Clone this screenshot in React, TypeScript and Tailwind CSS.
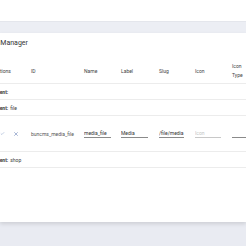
import React, { useState } from 'react';

interface MenuItem {
  id: string;
  name: string;
  label: string;
  slug: string;
}

interface Group {
  parent: string;
  items: MenuItem[];
}

const groups: Group[] = [
  { parent: '', items: [] },
  {
    parent: 'file',
    items: [{ id: 'buncms_media_file', name: 'media_file', label: 'Media', slug: '/file/media' }],
  },
  { parent: 'shop', items: [] },
];

const cols = 'grid grid-cols-[39px_53px_37px_38px_36px_37px_40px]';

const CheckIcon = () => (
  <svg width="5" height="5" viewBox="0 0 24 24" fill="none" stroke="#8aa0c8" strokeWidth="2.5">
    <path d="M4 12l5 5L20 6" />
  </svg>
);

const CloseIcon = () => (
  <svg width="6" height="6" viewBox="0 0 24 24" fill="none" stroke="#6f86b8" strokeWidth="2.4">
    <path d="M5 5l14 14M19 5L5 19" />
  </svg>
);

const App: React.FC = () => {
  const [rows, setRows] = useState(groups);

  const updateItem = (g: number, i: number, key: keyof MenuItem, value: string) => {
    const next = rows.map((grp, gi) =>
      gi !== g ? grp : { ...grp, items: grp.items.map((it, ii) => (ii !== i ? it : { ...it, [key]: value })) }
    );
    setRows(next);
  };

  return (
    <div className="w-[246px] h-[246px] overflow-hidden bg-[#e9ebf2] font-['Roboto',sans-serif] text-[#3a3a3a]">
      <div className="h-[21px] bg-white" />
      <div className="h-[12px] bg-[#eceef4] border-t border-[#e4e6ec]" />
      <div className="h-[189px] bg-white shadow-[0_2px_4px_rgba(0,0,0,0.12)] overflow-hidden">
        <div className="ml-[-19px] pt-[7px] h-[25px] text-[7px] leading-[7px] text-[#333]">Menu Manager</div>

        <div className="ml-[-8px] text-[5px] leading-[6px]">
          {/* header */}
          <div className={`${cols} h-[26px] items-center border-b border-[#ececec] text-[#444]`}>
            <div className="pl-[2px]">Actions</div>
            <div>ID</div>
            <div>Name</div>
            <div>Label</div>
            <div>Slug</div>
            <div>Icon</div>
            <div className="leading-[9px] pt-[1px]">
              Icon
              <br />
              Type
            </div>
          </div>

          {rows.map((grp, g) => (
            <div key={g}>
              <div className="h-[16px] flex items-center border-b border-[#ececec]">
                <span className="font-bold">Parent:</span>
                {grp.parent && <span className="ml-[2px]">{grp.parent}</span>}
              </div>
              {grp.items.map((it, i) => (
                <div key={it.id} className={`${cols} h-[36px] items-center border-b border-[#ececec]`}>
                  <div className="flex items-center gap-[8px] pl-[8px]">
                    <CheckIcon />
                    <CloseIcon />
                  </div>
                  <div className="text-[#555]">{it.id}</div>
                  <div className="pr-[10px]">
                    <input
                      value={it.name}
                      onChange={e => updateItem(g, i, 'name', e.target.value)}
                      className="w-full h-[9px] text-[5px] text-[#333] border-b border-[#8a8a8a] outline-none bg-transparent"
                    />
                  </div>
                  <div className="pr-[11px]">
                    <input
                      value={it.label}
                      onChange={e => updateItem(g, i, 'label', e.target.value)}
                      className="w-full h-[9px] text-[5px] text-[#333] border-b border-[#8a8a8a] outline-none bg-transparent"
                    />
                  </div>
                  <div className="pr-[11px]">
                    <input
                      value={it.slug}
                      onChange={e => updateItem(g, i, 'slug', e.target.value)}
                      className="w-full h-[9px] text-[5px] text-[#333] border-b border-[#8a8a8a] outline-none bg-transparent"
                    />
                  </div>
                  <div className="pr-[11px]">
                    <input
                      placeholder="Icon"
                      className="w-full h-[9px] text-[5px] text-[#333] placeholder:text-[#c4c4c4] border-b border-[#c8c8c8] outline-none bg-transparent"
                    />
                  </div>
                  <div className="h-[9px] flex items-center justify-end pr-[4px] border-b border-[#8a8a8a] text-[#666] text-[4px]">
                    ▼
                  </div>
                </div>
              ))}
            </div>
          ))}
        </div>
      </div>
    </div>
  );
};

export default App;
